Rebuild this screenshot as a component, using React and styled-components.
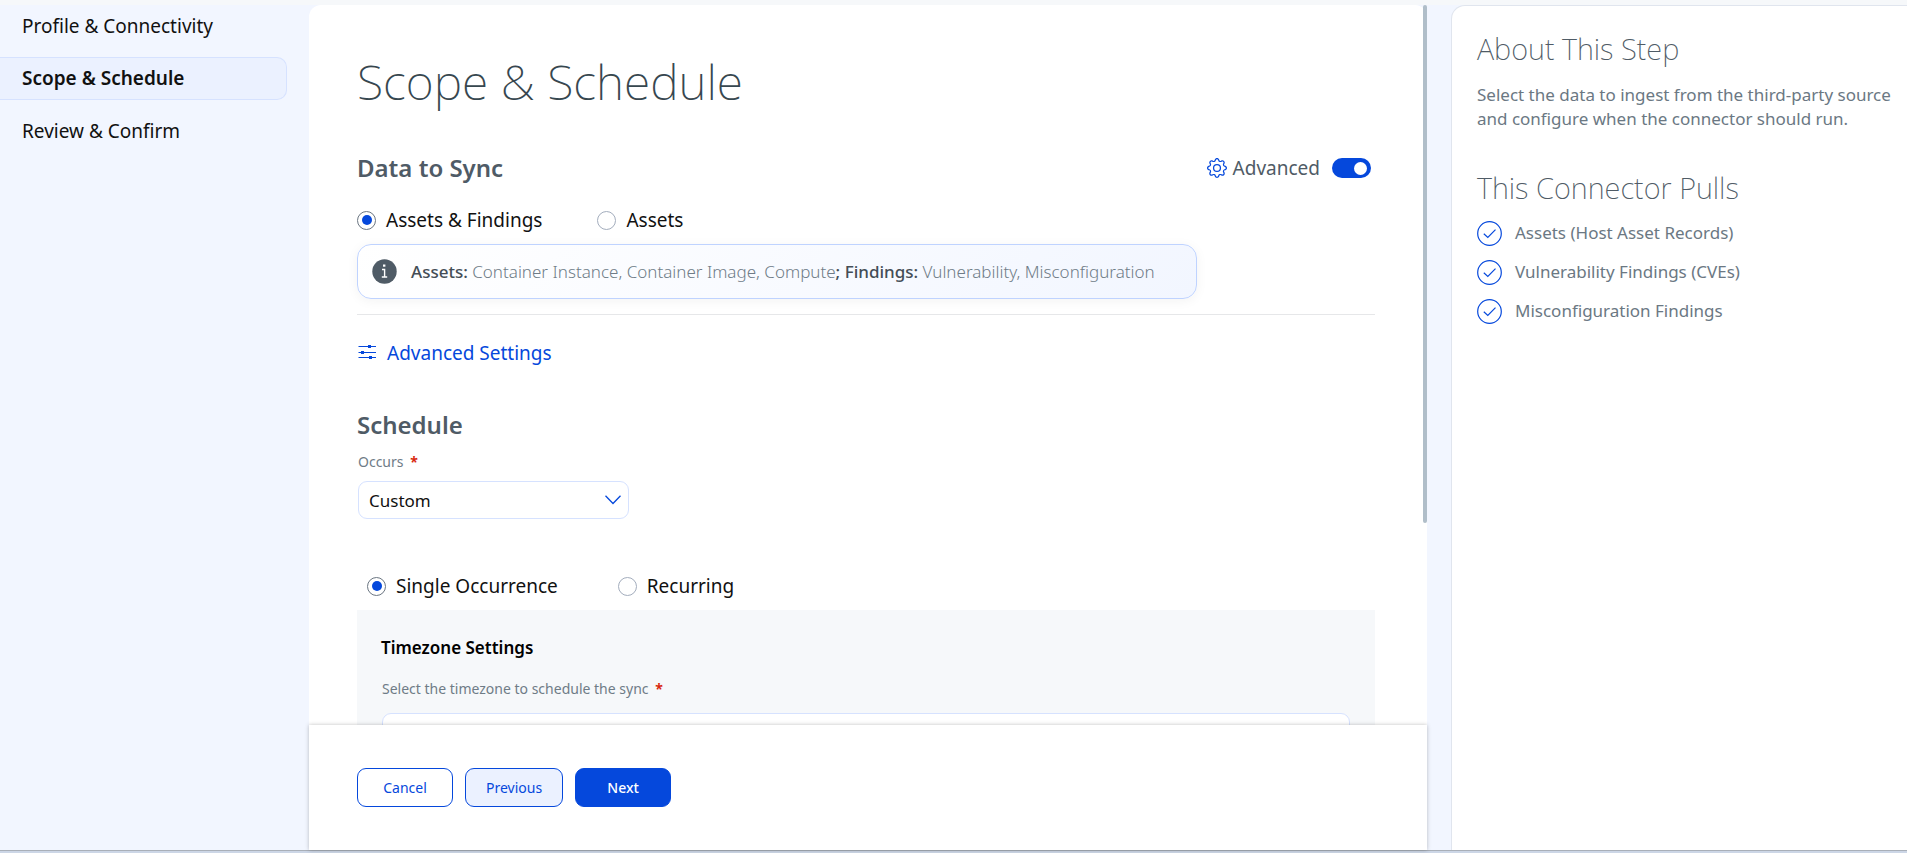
import { useState } from "react"
import styled, { createGlobalStyle } from "styled-components"

const GlobalStyle = createGlobalStyle`
*{
    box-sizing: border-box;
}
body{
    margin: 0;
    background: #f2f6ff;
    color: #111;
    font-family: "Noto Sans", sans-serif;
    font-size: 16px;
    line-height: 24px;
}
h1, h2, h3, p, ul, fieldset{
    margin: 0;
    padding: 0;
    border: 0;
}
button, select, input{
    font-family: inherit;
    margin: 0;
}
`

const Page = styled.div`
display: flex;
flex-direction: column;
height: 100vh;
overflow: hidden;
border-top: 5px solid #f6f8fa;
`

const Columns = styled.div`
display: grid;
grid-template-columns: 309px minmax(0, 1fr) 456px;
flex: 1;
min-height: 0;
`

const BottomBar = styled.div`
height: 3px;
background: #ccd6e6;
border-top: 1px solid #a9afb8;
`

const Steps = styled.nav`
display: flex;
flex-direction: column;
gap: 10px;
padding-right: 22px;
`

const Step = styled.a`
padding: 8px 22px;
border: 1px solid ${({ $active }) => ($active ? "#d6e2ff" : "transparent")};
border-left: 0;
border-radius: 0 10px 10px 0;
background: ${({ $active }) => ($active ? "#ebf1ff" : "transparent")};
color: #111;
font-size: 19px;
font-weight: ${({ $active }) => ($active ? 600 : 400)};
line-height: 25px;
text-decoration: none;

&:first-child{
    padding-bottom: 7px;
}
`

const Main = styled.main`
display: flex;
flex-direction: column;
min-height: 0;
margin-right: 24px;
border-radius: 12px 12px 0 0;
background: #fff;
`

const ScrollArea = styled.div`
position: relative;
flex: 1;
min-height: 0;
`

const Scroller = styled.div`
height: 100%;
overflow-y: auto;
scrollbar-width: none;
padding: 44px 52px 0 48px;
`

// lies over the content, so it takes no width from the form
const ScrollThumb = styled.div`
position: absolute;
top: 0;
right: 0;
width: 4px;
height: 72%;
border-radius: 2px;
background: #b0bec9;
`

const Title = styled.h1`
color: #37474f;
font-size: 48px;
font-weight: 200;
line-height: 66px;
`

const SectionHead = styled.div`
display: flex;
align-items: center;
justify-content: space-between;
margin-top: 37px;
padding-right: 4px;
`

const Heading = styled.h2`
color: #4f5b66;
font-size: 24px;
font-weight: 600;
line-height: 32px;
`

const AdvancedToggle = styled.label`
display: flex;
align-items: center;
gap: 6px;
color: #4f5b66;
font-size: 19px;
line-height: 26px;
`

const Switch = styled.input`
appearance: none;
display: flex;
align-items: center;
width: 39px;
height: 20px;
margin-left: 6px;
padding: 0 4px;
border-radius: 10px;
background: ${({ checked }) => (checked ? "#0548dc" : "#b0bec9")};
justify-content: ${({ checked }) => (checked ? "flex-end" : "flex-start")};

&::before{
    content: "";
    width: 13px;
    height: 13px;
    border-radius: 50%;
    background: #fff;
}
`

const RadioGroup = styled.fieldset`
display: flex;
gap: ${({ $gap }) => $gap}px;
margin-top: ${({ $top }) => $top}px;
padding-left: ${({ $indent }) => $indent || 0}px;
`

const RadioLabel = styled.label`
display: flex;
align-items: center;
gap: 10px;
color: #111;
font-size: 19px;
line-height: 26px;
`

const RadioInput = styled.input`
appearance: none;
display: grid;
place-items: center;
width: 19px;
height: 19px;
border: 1px solid ${({ checked }) => (checked ? "#6b7682" : "#a3adbd")};
border-radius: 50%;
background: #fff;

&:checked::before{
    content: "";
    width: 10px;
    height: 10px;
    border-radius: 50%;
    background: #0548dc;
}
`

const Notice = styled.div`
display: flex;
align-items: center;
gap: 14px;
width: fit-content;
margin-top: 11px;
padding: 14px 41px 14px 14px;
border: 1px solid #bfd3ff;
border-radius: 14px;
background: linear-gradient(135deg, #fff, #f2f6ff);
box-shadow: 0 2px 12px rgba(0, 0, 0, 0.05);
color: #6f7c87;
font-size: 17px;
font-weight: 300;
line-height: 25px;

strong{
    color: #444d56;
    font-weight: 500;
}
`

const Divider = styled.hr`
height: 1px;
margin: 15px 0 0;
border: 0;
background: #e6e7e9;
`

const SettingsLink = styled.a`
display: flex;
align-items: center;
gap: 10px;
width: fit-content;
margin: 25px 0 43px;
color: #0548dc;
font-size: 19px;
line-height: 26px;
text-decoration: none;
`

const FieldLabel = styled.label`
display: block;
margin-top: ${({ $top }) => $top}px;
padding-left: 1px;
color: #6f7c87;
font-size: 14px;
line-height: 20px;
`

const Required = styled.span`
margin-left: 3px;
color: #d92a10;
font-weight: 700;
`

const SelectBox = styled.div`
display: grid;
align-items: center;
width: ${({ $width }) => $width};
margin: ${({ $top }) => $top}px 0 0 1px;

> *{
    grid-area: 1 / 1;
}
svg{
    justify-self: end;
    margin-right: 8px;
    pointer-events: none;
}
`

const Select = styled.select`
appearance: none;
width: 100%;
height: 38px;
padding: 0 10px;
border: 1px solid #d6e2ff;
border-radius: 9px;
background: #fff;
color: #111;
font-size: 17px;
`

const TimezonePanel = styled.section`
margin: 11px 0 120px;
padding: 26px 24px 80px;
background: #f6f8fa;
`

const PanelTitle = styled.h3`
color: #000;
font-size: 17px;
font-weight: 600;
line-height: 24px;
`

const Footer = styled.footer`
position: relative;
display: flex;
gap: 12px;
padding: 43px 48px;
background: #fff;
box-shadow: 0 0 4px rgba(0, 0, 0, 0.25);
`

const Button = styled.button`
min-width: 96px;
height: 39px;
padding: 0 20px;
border: 1px solid #0548dc;
border-radius: 9px;
background: ${({ $bg }) => $bg || "#fff"};
color: ${({ $color }) => $color || "#0548dc"};
font-size: 14px;
font-weight: ${({ $weight }) => $weight || 400};
`

const Aside = styled.aside`
padding: 25px 16px 24px 25px;
border: 1px solid #e0e5ee;
border-width: 1px 0 0 1px;
border-radius: 14px 0 0 0;
background: #fff;
`

const AsideTitle = styled.h2`
color: #4f5b66;
font-size: 29px;
font-weight: 200;
line-height: 36px;
`

const AsideText = styled.p`
margin: 16px 0 39px;
color: #6b7883;
font-size: 17px;
line-height: 24px;
`

const PullList = styled.ul`
display: grid;
gap: 13px;
margin-top: 14px;
list-style: none;
`

const PullItem = styled.li`
display: flex;
align-items: center;
gap: 13px;
color: #6b7883;
font-size: 17px;
line-height: 26px;
`

const GearIcon = () => (
    <svg width="20" height="20" viewBox="0 0 16 16" fill="#0548dc" aria-hidden="true">
        <path d="M8 4.754a3.246 3.246 0 1 0 0 6.492 3.246 3.246 0 0 0 0-6.492M5.754 8a2.246 2.246 0 1 1 4.492 0 2.246 2.246 0 0 1-4.492 0" />
        <path d="M9.796 1.343c-.527-1.79-3.065-1.79-3.592 0l-.094.319a.873.873 0 0 1-1.255.52l-.292-.16c-1.64-.892-3.433.902-2.54 2.541l.159.292a.873.873 0 0 1-.52 1.255l-.319.094c-1.79.527-1.79 3.065 0 3.592l.319.094a.873.873 0 0 1 .52 1.255l-.16.292c-.892 1.64.901 3.434 2.541 2.54l.292-.159a.873.873 0 0 1 1.255.52l.094.319c.527 1.79 3.065 1.79 3.592 0l.094-.319a.873.873 0 0 1 1.255-.52l.292.16c1.64.893 3.434-.902 2.54-2.541l-.159-.292a.873.873 0 0 1 .52-1.255l.319-.094c1.79-.527 1.79-3.065 0-3.592l-.319-.094a.873.873 0 0 1-.52-1.255l.16-.292c.893-1.64-.902-3.433-2.541-2.54l-.292.159a.873.873 0 0 1-1.255-.52zm-2.633.283c.246-.835 1.428-.835 1.674 0l.094.319a1.873 1.873 0 0 0 2.693 1.115l.291-.16c.764-.415 1.6.42 1.184 1.185l-.159.292a1.873 1.873 0 0 0 1.116 2.692l.318.094c.835.246.835 1.428 0 1.674l-.319.094a1.873 1.873 0 0 0-1.115 2.693l.16.291c.415.764-.42 1.6-1.185 1.184l-.291-.159a1.873 1.873 0 0 0-2.693 1.116l-.094.318c-.246.835-1.428.835-1.674 0l-.094-.319a1.873 1.873 0 0 0-2.692-1.115l-.292.16c-.764.415-1.6-.42-1.184-1.185l.159-.291A1.873 1.873 0 0 0 1.945 8.93l-.319-.094c-.835-.246-.835-1.428 0-1.674l.319-.094A1.873 1.873 0 0 0 3.06 4.377l-.16-.292c-.415-.764.42-1.6 1.185-1.184l.292.159a1.873 1.873 0 0 0 2.692-1.115z" />
    </svg>
)

const InfoIcon = () => (
    <svg width="25" height="25" viewBox="0 0 25 25" aria-hidden="true">
        <circle cx="12.5" cy="12.5" r="12.2" fill="#4f5b66" />
        <rect x="11" y="5.5" width="2.4" height="2.2" fill="#fff" />
        <path d="M10 10.5h2.6v7.2M9.8 18h5.4" fill="none" stroke="#fff" strokeWidth="1.4" />
    </svg>
)

const SlidersIcon = () => (
    <svg width="20" height="20" viewBox="0 0 20 20" aria-hidden="true">
        <path d="M1.5 3.5h17.5M1.5 9.5h17.5M1.5 14.5h17.5" stroke="#0548dc" />
        <path d="M11 2h3v3h-3zM4 8h3v3H4zM12 13h3v3h-3z" fill="#0548dc" />
    </svg>
)

const ChevronIcon = () => (
    <svg width="16" height="10" viewBox="0 0 16 10" aria-hidden="true">
        <path d="M.5 .8L8 8.5L15.5 .8" fill="none" stroke="#0548dc" strokeWidth="1.3" />
    </svg>
)

const CheckIcon = () => (
    <svg width="25" height="25" viewBox="0 0 25 25" fill="none" stroke="#0548dc" strokeWidth="1.2" aria-hidden="true">
        <circle cx="12.5" cy="12.5" r="11.8" />
        <path d="M6.8 12.8l4 3.6L18.5 8.6" />
    </svg>
)

const Radio = ({ name, label, value, onChange }) => (
    <RadioLabel>
        <RadioInput type="radio" name={name} checked={value === label} onChange={() => onChange(label)} />
        {label}
    </RadioLabel>
)

const pulls = ["Assets (Host Asset Records)", "Vulnerability Findings (CVEs)", "Misconfiguration Findings"]

export default function App() {
    const [advanced, setAdvanced] = useState(true)
    const [sync, setSync] = useState("Assets & Findings")
    const [occurrence, setOccurrence] = useState("Single Occurrence")

    return (
        <Page>
            <GlobalStyle />
            <Columns>
                <Steps>
                    <Step href="#profile">Profile &amp; Connectivity</Step>
                    <Step href="#scope" $active>Scope &amp; Schedule</Step>
                    <Step href="#review">Review &amp; Confirm</Step>
                </Steps>

                <Main>
                    <ScrollArea>
                        <Scroller>
                            <Title>Scope &amp; Schedule</Title>

                            <SectionHead>
                                <Heading>Data to Sync</Heading>
                                <AdvancedToggle>
                                    <GearIcon />
                                    Advanced
                                    <Switch type="checkbox" role="switch" checked={advanced} onChange={(e) => setAdvanced(e.target.checked)} />
                                </AdvancedToggle>
                            </SectionHead>

                            <RadioGroup $gap={55} $top={23}>
                                <Radio name="sync" label="Assets & Findings" value={sync} onChange={setSync} />
                                <Radio name="sync" label="Assets" value={sync} onChange={setSync} />
                            </RadioGroup>
                            <Notice>
                                <InfoIcon />
                                <p>
                                    <strong>Assets:</strong> Container Instance, Container Image, Compute<strong>; Findings:</strong> Vulnerability, Misconfiguration
                                </p>
                            </Notice>
                            <Divider />
                            <SettingsLink href="#advanced">
                                <SlidersIcon />
                                Advanced Settings
                            </SettingsLink>

                            <Heading>Schedule</Heading>
                            <FieldLabel htmlFor="occurs" $top={11}>
                                Occurs <Required>*</Required>
                            </FieldLabel>
                            <SelectBox $width="271px" $top={9}>
                                <Select id="occurs" defaultValue="Custom">
                                    <option>Custom</option>
                                </Select>
                                <ChevronIcon />
                            </SelectBox>

                            <RadioGroup $gap={60} $top={54} $indent={10}>
                                <Radio name="occurrence" label="Single Occurrence" value={occurrence} onChange={setOccurrence} />
                                <Radio name="occurrence" label="Recurring" value={occurrence} onChange={setOccurrence} />
                            </RadioGroup>
                            <TimezonePanel>
                                <PanelTitle>Timezone Settings</PanelTitle>
                                <FieldLabel htmlFor="timezone" $top={19}>
                                    Select the timezone to schedule the sync <Required>*</Required>
                                </FieldLabel>
                                <SelectBox $width="calc(100% - 2px)" $top={14}>
                                    <Select id="timezone" />
                                    <ChevronIcon />
                                </SelectBox>
                            </TimezonePanel>
                        </Scroller>
                        <ScrollThumb />
                    </ScrollArea>

                    <Footer>
                        <Button type="button">Cancel</Button>
                        <Button type="button" $bg="#ebf1ff">Previous</Button>
                        <Button type="button" $bg="#0548dc" $color="#fff" $weight={500}>Next</Button>
                    </Footer>
                </Main>

                <Aside>
                    <AsideTitle>About This Step</AsideTitle>
                    <AsideText>
                        Select the data to ingest from the third-party source and configure when the connector should run.
                    </AsideText>
                    <AsideTitle>This Connector Pulls</AsideTitle>
                    <PullList>
                        {pulls.map((item) => (
                            <PullItem key={item}>
                                <CheckIcon />
                                {item}
                            </PullItem>
                        ))}
                    </PullList>
                </Aside>
            </Columns>
            <BottomBar />
        </Page>
    )
}
